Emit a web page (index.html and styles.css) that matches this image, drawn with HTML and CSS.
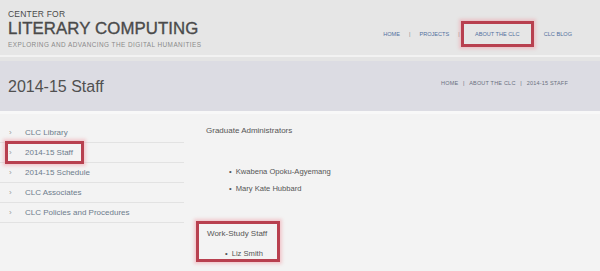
FILE: index.html
```html
<!DOCTYPE html>
<html lang="en">
<head>
    <meta charset="UTF-8">
    <title>2014-15 Staff - Center for Literary Computing</title>
    <link rel="stylesheet" href="styles.css">
</head>
<body>
    <header class="site-header">
        <div class="brand">
            <span class="brand-top">CENTER FOR</span>
            <span class="brand-name">LITERARY COMPUTING</span>
            <span class="brand-tag">EXPLORING AND ADVANCING THE DIGITAL HUMANITIES</span>
        </div>
        <nav class="main-nav">
            <a href="#">HOME</a>
            <span class="sep">|</span>
            <a href="#">PROJECTS</a>
            <span class="sep">|</span>
            <a href="#" class="marked nav-marked">ABOUT THE CLC</a>
            <a href="#">CLC BLOG</a>
        </nav>
    </header>

    <div class="title-band">
        <h1>2014-15 Staff</h1>
        <div class="crumbs">
            <a href="#">HOME</a> <span>|</span> <a href="#">ABOUT THE CLC</a> <span>|</span> 2014-15 STAFF
        </div>
    </div>

    <main class="content">
        <aside class="side-nav">
            <ul>
                <li><span class="arrow">›</span><a href="#">CLC Library</a></li>
                <li><span class="arrow">›</span><a href="#" class="marked side-marked">2014-15 Staff</a></li>
                <li><span class="arrow">›</span><a href="#">2014-15 Schedule</a></li>
                <li><span class="arrow">›</span><a href="#">CLC Associates</a></li>
                <li><span class="arrow">›</span><a href="#">CLC Policies and Procedures</a></li>
            </ul>
        </aside>

        <section class="staff">
            <p class="group-title">Graduate Administrators</p>
            <ul class="people first">
                <li>Kwabena Opoku-Agyemang</li>
                <li>Mary Kate Hubbard</li>
            </ul>
            <div class="marked work-box">
                <p class="group-title">Work-Study Staff</p>
                <ul class="people">
                    <li>Liz Smith</li>
                </ul>
            </div>
        </section>
    </main>
</body>
</html>
```

FILE: styles.css
```css
* {
    margin: 0;
    padding: 0;
    box-sizing: border-box;
}

body {
    font-family: 'Liberation Sans', Arial, sans-serif;
    background: #f3f3f3;
    width: 600px;
    height: 271px;
    overflow: hidden;
}

a {
    text-decoration: none;
    color: inherit;
}

ul {
    list-style: none;
}

/* red highlight boxes */
.marked {
    border: 3px solid #b8404f;
    box-shadow: 0 0 3px 2px rgba(240, 150, 160, 0.45);
}

.site-header {
    background: #e6e6e6;
    height: 57px;
    border-bottom: 2px solid #f2f2f2;
    display: flex;
    justify-content: space-between;
    align-items: flex-start;
    padding: 10px 0 0 8px;
}

.brand {
    display: flex;
    flex-direction: column;
    color: #4a4a4a;
}

.brand-top {
    font-size: 8.5px;
    line-height: 9px;
    letter-spacing: 0.2px;
}

.brand-name {
    font-size: 16.8px;
    line-height: 19px;
    letter-spacing: 0.1px;
    -webkit-text-stroke: 0.35px #4a4a4a;
}

.brand-tag {
    font-size: 6.4px;
    line-height: 8px;
    letter-spacing: 0.45px;
    color: #8a8a8a;
    margin-top: 3px;
}

.main-nav {
    display: flex;
    align-items: center;
    margin-top: 11px;
    padding-right: 28px;
    font-size: 5.6px;
    color: #52709e;
}

.main-nav .sep {
    color: #888;
    margin: 0 9px;
}

.nav-marked {
    height: 26px;
    width: 73px;
    display: flex;
    align-items: center;
    justify-content: center;
    margin-left: -8px;
    margin-right: 10px;
}

.title-band {
    background: #dcdce3;
    height: 57px;
    border-top: 4px solid #e4e4e4;
    border-bottom: 3px solid #f8f8f8;
    display: flex;
    justify-content: space-between;
    align-items: center;
    padding: 0 32px 0 8px;
}

.title-band h1 {
    font-weight: normal;
    font-size: 16px;
    color: #505050;
    margin-top: 1px;
}

.crumbs {
    font-size: 5.5px;
    color: #6a7080;
    margin-top: -6px;
    letter-spacing: 0.2px;
}

.crumbs span {
    margin: 0 3px;
}

.content {
    display: flex;
    padding-top: 9px;
}

.side-nav {
    width: 184px;
    flex-shrink: 0;
}

.side-nav li {
    height: 20px;
    display: flex;
    align-items: center;
    border-bottom: 1px solid #e2e2e2;
    font-size: 8px;
    color: #6d7c8c;
}

.side-nav .arrow {
    width: 25px;
    padding-left: 9px;
    color: #999;
    font-size: 8px;
}

.side-marked {
    margin-left: -20px;
    padding: 4px 8px 4px 17px;
}

.staff {
    padding-left: 22px;
    padding-top: 2px;
    color: #555;
    font-size: 8px;
}

.group-title {
    line-height: 12px;
}

.people li {
    line-height: 17px;
    padding-left: 23px;
    font-size: 7.6px;
}

.people li::before {
    content: '•';
    margin-right: 4px;
}

.people.first {
    margin-top: 26px;
}

.work-box {
    margin-top: 24px;
    margin-left: -10px;
    width: 84px;
    height: 41px;
    padding: 4px 0 0 8px;
}

.work-box .people {
    margin-top: 5px;
}

.work-box .people li {
    padding-left: 18px;
}
```
